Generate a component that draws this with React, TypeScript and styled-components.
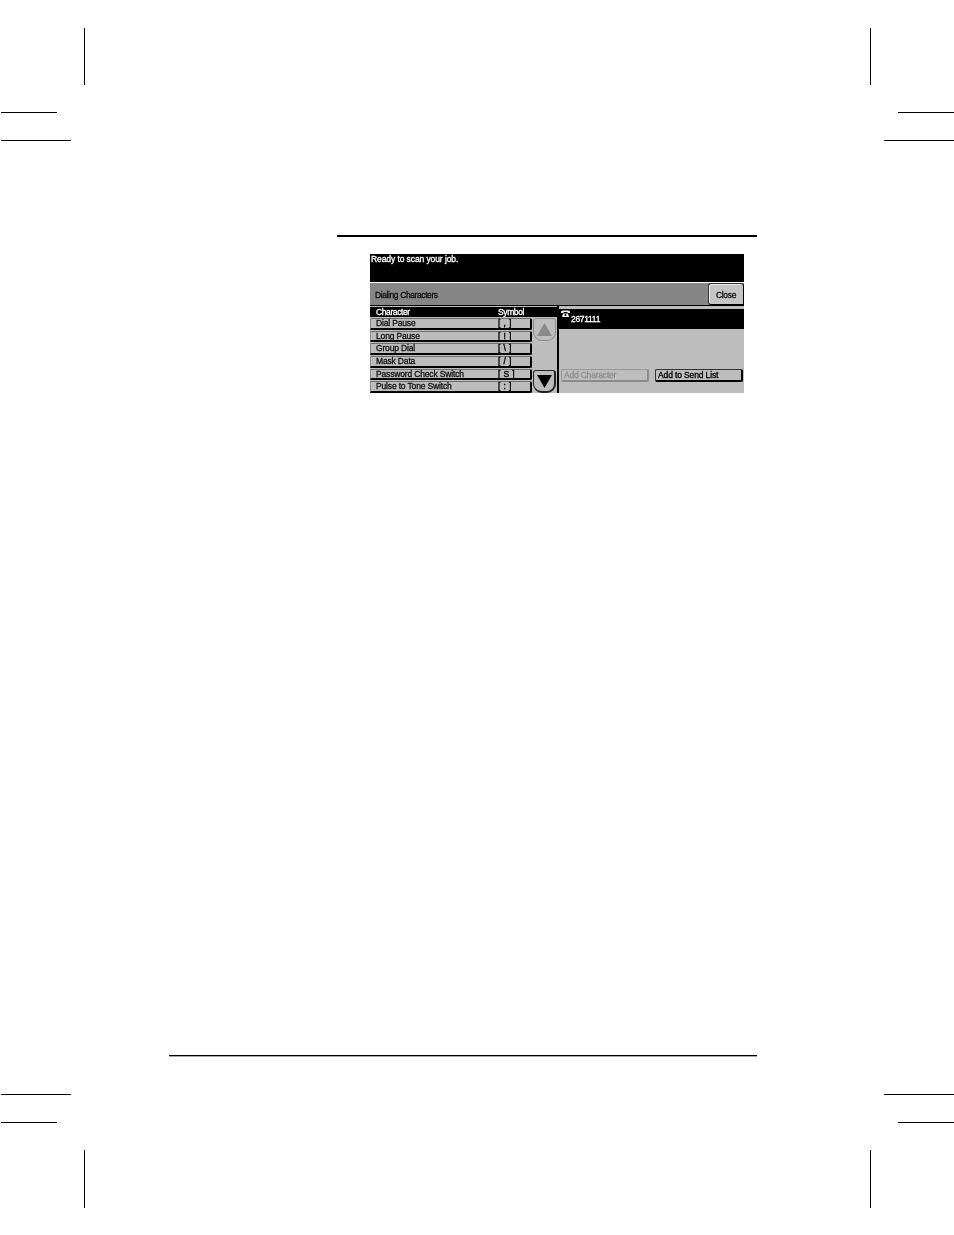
import React from "react";
import styled, { createGlobalStyle } from "styled-components";

const GlobalStyle = createGlobalStyle`
  html, body {
    margin: 0;
    padding: 0;
    background: #fff;
  }
`;

const Sheet = styled.div`
  position: relative;
  width: 954px;
  height: 1235px;
  padding: 235px 197px 0 169px;
  box-sizing: border-box;
  display: flex;
  flex-direction: column;
  overflow: hidden;
  font-family: "Liberation Sans", Arial, sans-serif;
`;

const Mark = styled.div<{ $x: number; $y: number; $w: number; $h: number }>`
  position: absolute;
  left: ${(p) => p.$x}px;
  top: ${(p) => p.$y}px;
  width: ${(p) => p.$w}px;
  height: ${(p) => p.$h}px;
  background: #000;
`;

const TopRule = styled.div`
  align-self: flex-end;
  width: 420px;
  height: 2px;
  background: #000;
`;

const FootRule = styled.div`
  margin-top: 662px;
  height: 1px;
  background: #000;
  box-shadow: 0 0.5px 0 #555;
`;

const Screen = styled.div`
  margin: 17px 0 0 201px;
  width: 374px;
  height: 139px;
  display: flex;
  flex-direction: column;
  background: #bdbdbd;
  font-size: 8.5px;
  letter-spacing: -0.09px;
  -webkit-text-stroke: 0.3px currentColor;
  color: #000;
  filter: grayscale(1) blur(0.22px);
`;

const StatusBar = styled.div`
  height: 28px;
  flex: none;
  box-sizing: border-box;
  padding: 1px 0 0 1px;
  background: #000;
  color: #fff;
  line-height: 9px;
`;

const TitleBar = styled.div`
  height: 24px;
  flex: none;
  box-sizing: border-box;
  border-top: 1px solid #fff;
  border-bottom: 1px solid #000;
  background: #868686;
  display: flex;
  align-items: center;
  justify-content: space-between;
  padding-left: 5px;
  color: #111;
`;

const TitleText = styled.span`
  margin-top: 1px;
  letter-spacing: -0.4px;
`;

const CloseButton = styled.div`
  width: 36px;
  height: 22px;
  box-sizing: border-box;
  padding-top: 1px;
  display: flex;
  align-items: center;
  justify-content: center;
  background: #c4c4c4;
  border: 1px solid #000;
  border-left-color: #333;
  border-top-color: #333;
  border-radius: 3px 3px 0 3px;
  box-shadow: inset 1px 1px 0 #eee;
  letter-spacing: -0.3px;
`;

const Body = styled.div`
  flex: 1;
  display: flex;
  min-height: 0;
`;

const ListPane = styled.div`
  width: 187px;
  flex: none;
  display: grid;
  grid-template-columns: 162px 25px;
  grid-template-rows: 10px 1fr;
  padding-top: 1px;
`;

const HeaderRow = styled.div`
  grid-column: 1 / 3;
  background: #000;
  color: #fff;
  display: flex;
  align-items: center;
  padding-left: 6px;
  line-height: 10px;
  letter-spacing: -0.39px;
`;

const CharacterHead = styled.span`
  width: 122px;
`;

const Rows = styled.div`
  display: flex;
  flex-direction: column;
  gap: 1px;
  padding-top: 1px;
`;

const Row = styled.div`
  height: 8.7px;
  line-height: 8.7px;
  display: flex;
  align-items: center;
  padding-left: 5px;
  background: #bcbcbc;
  border-top: 1px solid #6e6e6e;
  border-left: 1px solid #8a8a8a;
  border-right: 2px solid #000;
  border-bottom: 2px solid #000;
  border-radius: 0 2px 2px 0;
`;

const RowName = styled.span`
  width: 122px;
  color: #111;
  letter-spacing: -0.16px;
`;

const RowSymbol = styled.span`
  letter-spacing: 0.4px;
  white-space: pre;
  -webkit-text-stroke: 0.4px #000;
`;

const ScrollColumn = styled.div`
  display: flex;
  flex-direction: column;
  justify-content: space-between;
  align-items: flex-end;
  padding: 1px 1px 0 0;
`;

const ScrollButton = styled.div<{ $off?: boolean }>`
  width: 23px;
  height: 23px;
  box-sizing: border-box;
  display: flex;
  align-items: center;
  justify-content: center;
  background: #bdbdbd;
  border: 1px solid ${(p) => (p.$off ? "#8f8f8f" : "#222")};
  border-bottom-width: ${(p) => (p.$off ? 1 : 2)}px;
  border-right-width: ${(p) => (p.$off ? 1 : 2)}px;
  border-radius: 3px 3px 9px 9px;
`;

const DetailPane = styled.div`
  flex: 1;
  display: flex;
  flex-direction: column;
  border-left: 2px solid #000;
  padding-top: 3px;
`;

const NumberBand = styled.div`
  height: 20px;
  flex: none;
  padding: 1px 0 0 2px;
  box-sizing: border-box;
  background: #000;
  color: #fff;
  display: flex;
  align-items: flex-start;
  gap: 1px;
  letter-spacing: -0.3px;
`;

const NumberText = styled.span`
  margin-top: 5px;
  line-height: 9px;
`;

const Actions = styled.div`
  display: flex;
  gap: 6px;
  margin: 40px 0 0 2px;
`;

const ActionButton = styled.div<{ $off?: boolean }>`
  width: 88px;
  height: 13px;
  box-sizing: border-box;
  padding-left: 2px;
  line-height: 11px;
  letter-spacing: ${(p) => (p.$off ? -0.2 : -0.13)}px;
  background: #bdbdbd;
  color: ${(p) => (p.$off ? "#8e8e8e" : "#000")};
  border: 1px solid ${(p) => (p.$off ? "#989898" : "#333")};
  border-right: 2px solid ${(p) => (p.$off ? "#8a8a8a" : "#000")};
  border-bottom: 2px solid ${(p) => (p.$off ? "#8a8a8a" : "#000")};
  border-radius: 2px;
`;

const marks = [
  [84, 28, 1.4, 57],
  [870, 28, 1.4, 57],
  [1, 112, 56, 1],
  [1, 140, 70, 1],
  [898, 112, 56, 1],
  [884, 140, 70, 1],
  [1, 1094, 70, 1],
  [1, 1122, 56, 1],
  [884, 1094, 70, 1],
  [898, 1122, 56, 1],
  [84, 1150, 1.4, 58],
  [870, 1150, 1.4, 58],
];

const rows = [
  ["Dial Pause", "[ , ]"],
  ["Long Pause", "[ ! ]"],
  ["Group Dial", "[ \\ ]"],
  ["Mask Data", "[ / ]"],
  ["Password Check Switch", "[ S ]"],
  ["Pulse to Tone Switch", "[ : ]"],
];

const PhoneIcon = () => (
  <svg width="9" height="8" viewBox="0 0 9 8">
    <path d="M0 3V1.5L1.5.5h6L9 1.5V3H6.5V2h-4v1z" fill="#fff" />
    <path d="M2 3.5h5L8 7H1z" fill="#fff" />
    <circle cx="4.5" cy="5" r="1" fill="#000" />
  </svg>
);

const Arrow = ({ up, color }: { up?: boolean; color: string }) => (
  <svg width="15" height="13" viewBox="0 0 15 13">
    <path d={up ? "M7.5 0L15 13H0z" : "M0 0h15L7.5 13z"} fill={color} />
  </svg>
);

const App: React.FC = () => {
  return (
    <Sheet>
      <GlobalStyle />
      {marks.map(([x, y, w, h]) => (
        <Mark key={`${x}-${y}`} $x={x} $y={y} $w={w} $h={h} />
      ))}
      <TopRule />
      <Screen>
        <StatusBar>Ready to scan your job.</StatusBar>
        <TitleBar>
          <TitleText>Dialing Characters</TitleText>
          <CloseButton>Close</CloseButton>
        </TitleBar>
        <Body>
          <ListPane>
            <HeaderRow>
              <CharacterHead>Character</CharacterHead>
              <span>Symbol</span>
            </HeaderRow>
            <Rows>
              {rows.map(([name, symbol]) => (
                <Row key={name}>
                  <RowName>{name}</RowName>
                  <RowSymbol>{symbol}</RowSymbol>
                </Row>
              ))}
            </Rows>
            <ScrollColumn>
              <ScrollButton $off>
                <Arrow up color="#8a8a8a" />
              </ScrollButton>
              <ScrollButton>
                <Arrow color="#000" />
              </ScrollButton>
            </ScrollColumn>
          </ListPane>
          <DetailPane>
            <NumberBand>
              <PhoneIcon />
              <NumberText>2671111</NumberText>
            </NumberBand>
            <Actions>
              <ActionButton $off>Add Character</ActionButton>
              <ActionButton>Add to Send List</ActionButton>
            </Actions>
          </DetailPane>
        </Body>
      </Screen>
      <FootRule />
    </Sheet>
  );
};

export default App;
